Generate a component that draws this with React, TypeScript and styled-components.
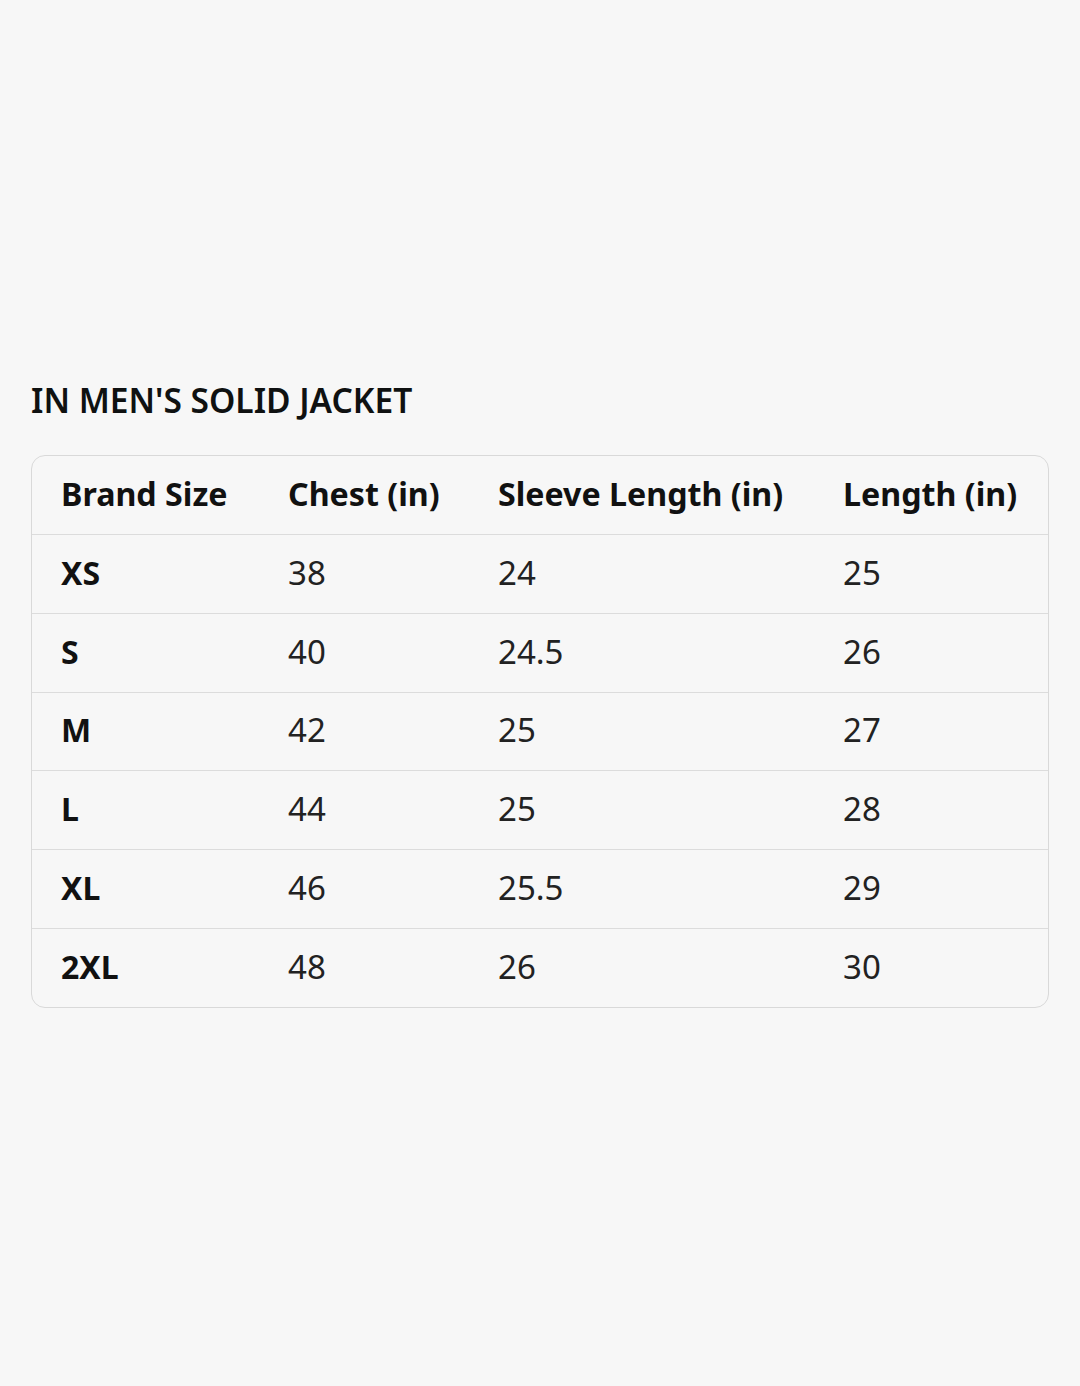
import React from "react";
import styled, { createGlobalStyle } from "styled-components";

const Global = createGlobalStyle`
  html, body { margin: 0; padding: 0; background: #f7f7f7; }
  body { font-family: "Noto Sans", "Open Sans", sans-serif; color: #0f1111; }
`;

const Page = styled.div`
  width: 1080px;
  height: 1386px;
  box-sizing: border-box;
  padding: 379px 32px 0 31px;
  display: flex;
  flex-direction: column;
`;

const Title = styled.h2`
  margin: 0 0 34px 0;
  font-size: 33.5px;
  font-weight: 600;
  line-height: 42px;
  letter-spacing: 0;
`;

const Card = styled.div`
  border: 1px solid #d9d9d9;
  border-radius: 14px;
  overflow: hidden;
  width: 1016px;
`;

const Table = styled.table`
  width: 100%;
  border-collapse: collapse;
  table-layout: fixed;
`;

const Row = styled.tr<{ $last?: boolean }>`
  height: ${(p) => (p.$last ? "78.5px" : "78.7px")};
  border-bottom: ${(p) => (p.$last ? "none" : "1px solid #dcdcdc")};
`;

const Cell = styled.td<{ $bold?: boolean }>`
  padding: 0 0 3px 29px;
  font-size: ${(p) => (p.$bold ? "32px" : "33px")};
  font-weight: ${(p) => (p.$bold ? 700 : 400)};
  color: ${(p) => (p.$bold ? "#111" : "#222")};
  text-align: left;
  vertical-align: middle;
  white-space: nowrap;
`;

const HeadCell = styled.th`
  padding: 0 0 4px 29px;
  font-size: 32.2px;
  font-weight: 700;
  color: #111;
  text-align: left;
  white-space: nowrap;
`;

const cols = [227, 210, 345, 234];
const headers = ["Brand Size", "Chest (in)", "Sleeve Length (in)", "Length (in)"];
const rows = [
  ["XS", "38", "24", "25"],
  ["S", "40", "24.5", "26"],
  ["M", "42", "25", "27"],
  ["L", "44", "25", "28"],
  ["XL", "46", "25.5", "29"],
  ["2XL", "48", "26", "30"],
];

export default function App() {
  return (
    <>
      <Global />
      <Page>
        <Title>IN MEN'S SOLID JACKET</Title>
        <Card>
          <Table>
            <colgroup>
              {cols.map((w, i) => (
                <col key={i} style={{ width: w }} />
              ))}
            </colgroup>
            <thead>
              <Row>
                {headers.map((h) => (
                  <HeadCell key={h}>{h}</HeadCell>
                ))}
              </Row>
            </thead>
            <tbody>
              {rows.map((r, i) => (
                <Row key={r[0]} $last={i === rows.length - 1}>
                  {r.map((c, j) => (
                    <Cell key={j} $bold={j === 0}>
                      {c}
                    </Cell>
                  ))}
                </Row>
              ))}
            </tbody>
          </Table>
        </Card>
      </Page>
    </>
  );
}
